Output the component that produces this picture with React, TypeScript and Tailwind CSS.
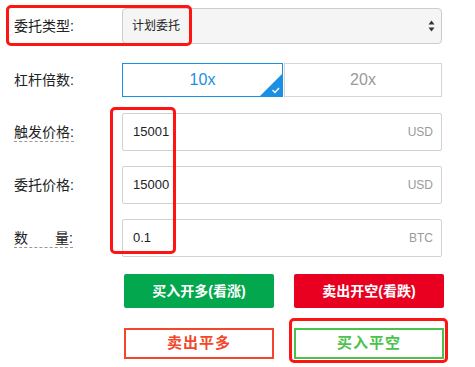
import React from "react";

const Label = ({ text, dashed, spread }: { text: string; dashed?: boolean; spread?: boolean }) => (
  <div className="w-[108px] flex items-center">
    <span
      className={
        "text-[14px] leading-[18px] text-[#222] " +
        (dashed ? "border-b border-dashed border-[#999] " : "") +
        (spread ? "flex justify-between w-[59px]" : "")
      }
    >
      {spread ? (
        <>
          <span>数</span>
          <span>量:</span>
        </>
      ) : (
        text
      )}
    </span>
  </div>
);

const Field = ({ value, unit }: { value: string; unit: string }) => (
  <div className="w-[320px] h-[38px] border border-[#d2d2d2] rounded-[2px] flex items-center justify-between pl-[10px] pr-[8px] bg-white">
    <span className="text-[13px] text-[#222]">{value}</span>
    <span className="text-[12px] text-[#9a9a9a]">{unit}</span>
  </div>
);

export default function App() {
  return (
    <div
      className="relative w-[475px] h-[367px] bg-white pt-2 pl-[14px] overflow-hidden"
      style={{ fontFamily: '"Liberation Sans", "Noto Sans CJK SC", sans-serif' }}
    >
      {/* Row 1 */}
      <div className="flex items-center h-[36px]">
        <Label text="委托类型:" />
        <div className="w-[320px] h-[36px] rounded-[4px] border border-[#cccccc] bg-[#f5f5f5] flex items-center justify-between pl-[9px] pr-[6px]">
          <span className="text-[12px] text-[#222]">计划委托</span>
          <svg width="7" height="12" viewBox="0 0 7 12">
            <path d="M3.5 0.5 L6.5 4.5 L0.5 4.5 Z" fill="#333" />
            <path d="M3.5 11.5 L6.5 7.5 L0.5 7.5 Z" fill="#333" />
          </svg>
        </div>
      </div>

      {/* Row 2 */}
      <div className="flex items-center h-[34px] mt-[19px]">
        <Label text="杠杆倍数:" />
        <div className="flex w-[320px] h-[34px]">
          <div className="relative w-[161px] h-full border border-[#1a8fe3] flex items-center justify-center text-[16px] text-[#1a8fe3] overflow-hidden">
            10x
            <svg className="absolute right-0 bottom-0" width="22" height="22" viewBox="0 0 22 22">
              <path d="M22 0 L22 22 L0 22 Z" fill="#1a8fe3" />
              <path d="M12.5 16 L15 18.5 L19 14" stroke="#fff" strokeWidth="1.3" fill="none" />
            </svg>
          </div>
          <div className="ml-[1px] flex-1 h-full border border-[#d6d6d6] flex items-center justify-center text-[16px] text-[#999]">
            20x
          </div>
        </div>
      </div>

      {/* Inputs */}
      <div className="flex items-center h-[38px] mt-[16px]">
        <Label text="触发价格:" dashed />
        <Field value="15001" unit="USD" />
      </div>
      <div className="flex items-center h-[38px] mt-[15px]">
        <Label text="委托价格:" />
        <Field value="15000" unit="USD" />
      </div>
      <div className="flex items-center h-[38px] mt-[15px]">
        <Label text="" dashed spread />
        <Field value="0.1" unit="BTC" />
      </div>

      {/* Buttons */}
      <div className="flex gap-[20px] mt-[17px] pl-[110px]">
        <div className="w-[150px] h-[34px] rounded-[2px] bg-[#03a84e] flex items-center justify-center text-white text-[14px] font-bold">
          买入开多(看涨)
        </div>
        <div className="w-[150px] h-[34px] rounded-[2px] bg-[#e90020] flex items-center justify-center text-white text-[14px] font-bold">
          卖出开空(看跌)
        </div>
      </div>
      <div className="flex gap-[20px] mt-[20px] pl-[110px]">
        <div className="w-[150px] h-[31px] border-2 border-[#f3462a] flex items-center justify-center text-[#f3462a] text-[15px] font-bold tracking-[1px]">
          卖出平多
        </div>
        <div className="w-[150px] h-[31px] border-2 border-[#4cc24c] flex items-center justify-center text-[#4cc24c] text-[15px] font-bold tracking-[1px]">
          买入平空
        </div>
      </div>

      {/* Annotation overlays */}
      <div className="absolute left-[6px] top-[5px] w-[186px] h-[41px] border-[3px] border-[#ff1414] rounded-[5px] pointer-events-none" />
      <div className="absolute left-[110px] top-[107px] w-[66px] h-[147px] border-[3px] border-[#ff1414] rounded-[5px] pointer-events-none" />
      <div className="absolute left-[289px] top-[318px] w-[159px] h-[45px] border-[3px] border-[#ff1414] rounded-[5px] pointer-events-none" />
    </div>
  );
}
